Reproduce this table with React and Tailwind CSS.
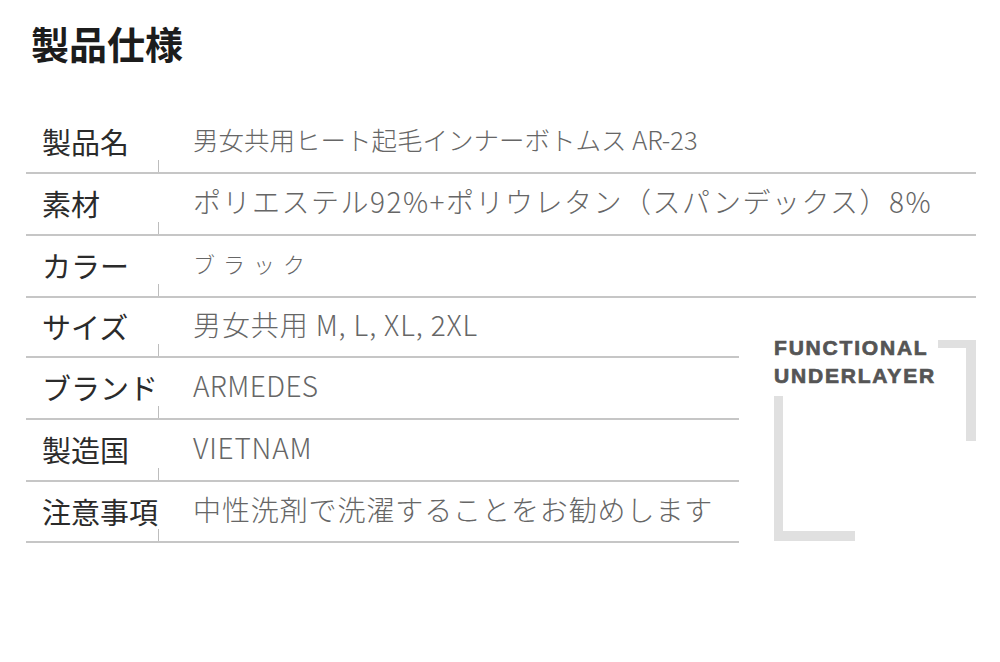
const rows = [
  { label: '製品名', value: '男女共用ヒート起毛インナーボトムス AR-23', h: 'h-[60px]', vc: 'text-[25.5px]' },
  { label: '素材', value: 'ポリエステル92%+ポリウレタン（スパンデックス）8%', h: 'h-[60px]', vc: 'text-[28px] tracking-[1.5px]' },
  { label: 'カラー', value: 'ブラック', h: 'h-[60px]', vc: 'text-[22px] tracking-[8px] pl-[4px]' },
]

const lower = [
  { label: 'サイズ', value: '男女共用 M, L, XL, 2XL', h: 'h-[58px]', vc: 'text-[28px] tracking-[0.9px]' },
  { label: 'ブランド', value: 'ARMEDES', h: 'h-[60px]', vc: 'text-[28px] tracking-[0.4px]' },
  { label: '製造国', value: 'VIETNAM', h: 'h-[60px]', vc: 'text-[28px] tracking-[0.8px]' },
  { label: '注意事項', value: '中性洗剤で洗濯することをお勧めします', h: 'h-[59px]', vc: 'text-[28px] tracking-[0.9px]' },
]

function Row({ label, value, h, vc }) {
  return (
    <div>
      <div className={`flex ${h}`}>
        <div className="w-[133px] flex flex-col">
          <div className="flex-1 flex items-center pl-[16px] text-[29px] text-[#2b2b2b]">{label}</div>
          <div className="self-end w-px h-[12px] -mt-[12px] bg-[#bdbdbd]" />
        </div>
        <div className={`flex items-center pl-[34px] pb-[6px] font-light text-[#666] whitespace-nowrap ${vc}`}>{value}</div>
      </div>
      <div className="h-[2px] bg-[#c6c6c6]" />
    </div>
  )
}

export default function App() {
  return (
    <div className="w-[1000px] h-[662px] bg-white overflow-hidden font-['Noto_Sans_CJK_JP','Noto_Sans',sans-serif]">
      <h1 className="pl-[31px] pt-[24px] h-[112px] text-[38px] font-bold leading-none text-[#1c1c1c]">製品仕様</h1>

      <div className="ml-[26px] w-[950px]">
        {rows.map(r => <Row key={r.label} {...r} />)}

        <div className="flex">
          <div className="w-[713px]">
            {lower.map(r => <Row key={r.label} {...r} />)}
          </div>

          {/* decoration block */}
          <div className="flex-1 flex pl-[35px] pt-[42px]">
            <div className="flex flex-col">
              <div className="font-['Liberation_Sans',Arial,sans-serif] font-bold text-[21px] leading-[28px] tracking-[1.8px] text-[#555] [-webkit-text-stroke:0.7px_#555]">
                <div className="-mt-[6px]">FUNCTIONAL</div>
                <div>UNDERLAYER</div>
              </div>
              <div className="mt-[6px] w-[81px] h-[145px] border-l-[9px] border-b-[10px] border-[#e0e0e0]" />
            </div>
            <div className="ml-auto w-[38px] h-[101px] border-t-[8px] border-r-[10px] border-[#e0e0e0]" />
          </div>
        </div>
      </div>
    </div>
  )
}
